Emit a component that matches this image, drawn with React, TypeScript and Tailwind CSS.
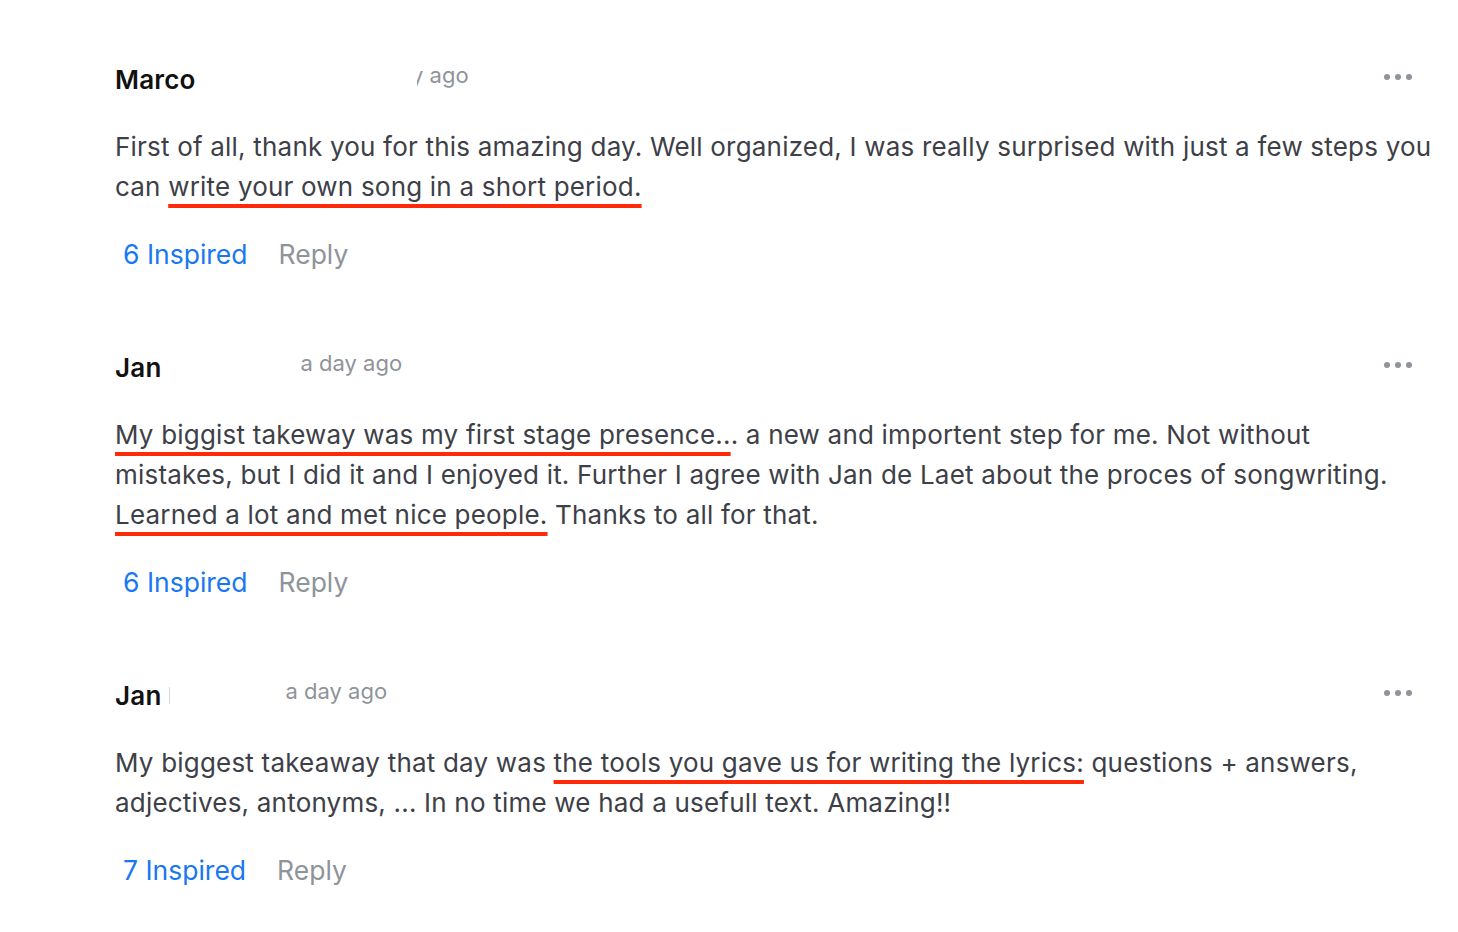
import { Fragment } from "react";

type Segment = { text: string; mark?: boolean };

type Comment = {
    name: string;
    timeBox: string;
    bar?: boolean;
    lines: Segment[][];
    inspired: number;
};

const comments: Comment[] = [
    {
        name: "Marco",
        timeBox: "ml-[221px] w-[52px] justify-end",
        lines: [
            [{ text: "First of all, thank you for this amazing day. Well organized, I was really surprised with just a few steps you" }],
            [{ text: "can " }, { text: "write your own song in a short period.", mark: true }],
        ],
        inspired: 6,
    },
    {
        name: "Jan",
        timeBox: "ml-[139px]",
        lines: [
            [{ text: "My biggist takeway was my first stage presence..", mark: true }, { text: ". a new and importent step for me. Not without" }],
            [{ text: "mistakes, but I did it and I enjoyed it. Further I agree with Jan de Laet about the proces of songwriting." }],
            [{ text: "Learned a lot and met nice people.", mark: true }, { text: " Thanks to all for that." }],
        ],
        inspired: 6,
    },
    {
        name: "Jan",
        timeBox: "ml-[116px]",
        bar: true,
        lines: [
            [{ text: "My biggest takeaway that day was " }, { text: "the tools you gave us for writing the lyrics:", mark: true }, { text: " questions + answers," }],
            [{ text: "adjectives, antonyms, ... In no time we had a usefull text. Amazing!!" }],
        ],
        inspired: 7,
    },
];

function Dots() {
    return (
        <div className="flex items-center gap-[5px] mb-[4px]">
            <span className="w-[6px] h-[6px] rounded-full bg-[#8f939a]" />
            <span className="w-[6px] h-[6px] rounded-full bg-[#8f939a]" />
            <span className="w-[6px] h-[6px] rounded-full bg-[#8f939a]" />
        </div>
    );
}

function CommentItem({ c }: { c: Comment }) {
    return (
        <div className="flex flex-col">
            <div className="flex items-center h-[32px]">
                <span className="text-[26px] font-semibold text-[#111] tracking-[0.2px]">{c.name}</span>
                {c.bar && <span className="ml-[7px] w-px h-[17px] bg-[#d4d6d9]" />}
                {/* time partly hidden behind a redaction, as in the source */}
                <span className={`flex overflow-hidden whitespace-nowrap mb-[8px] text-[22px] text-[#8f939a] ${c.timeBox}`}>
                    <span className="shrink-0">a day ago</span>
                </span>
                <div className="flex-1" />
                <Dots />
            </div>

            <p className="mt-[32px] text-[26px] leading-[40px] tracking-[0.2px] text-[#3d4047] whitespace-nowrap">
                {c.lines.map((line, i) => (
                    <Fragment key={i}>
                        {line.map((s, j) =>
                            s.mark ? (
                                <span
                                    key={j}
                                    className="underline decoration-[#ff2a0a] decoration-[4px] underline-offset-[8px]"
                                >
                                    {s.text}
                                </span>
                            ) : (
                                <span key={j}>{s.text}</span>
                            )
                        )}
                        {i < c.lines.length - 1 && <br />}
                    </Fragment>
                ))}
            </p>

            <div className="mt-[28px] flex items-center h-[40px] text-[26.5px]">
                <button className="pl-[8px] text-[#1877f2]">{c.inspired} Inspired</button>
                <button className="ml-[31px] text-[#8f939a]">Reply</button>
            </div>
        </div>
    );
}

export default function App() {
    return (
        <div className="min-h-screen bg-white font-['Inter',sans-serif] pl-[115px] pr-[46px] pt-[63px]">
            <div className="flex flex-col gap-[76px]">
                {comments.map((c, i) => (
                    <CommentItem key={i} c={c} />
                ))}
            </div>
        </div>
    );
}
